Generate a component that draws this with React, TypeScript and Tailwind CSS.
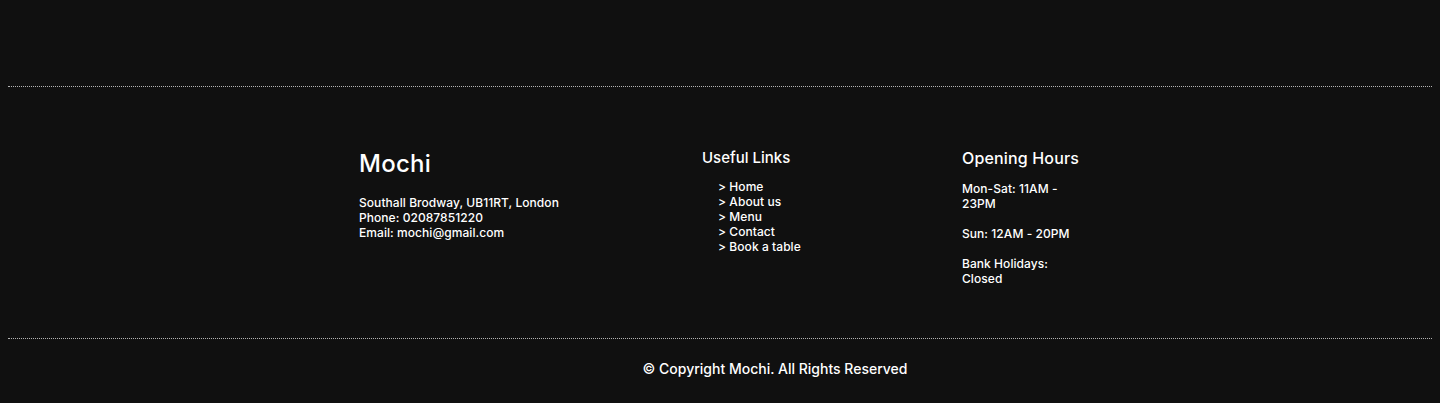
const links = ["Home", "About us", "Menu", "Contact", "Book a table"];

export default function App() {
  return (
    <div
      className="min-h-[403px] bg-[#101010] text-white"
      style={{ fontFamily: "Inter, 'Noto Sans', sans-serif" }}
    >
      <div className="h-[86px]" />
      <footer>
        <div className="mx-2 border-t border-dotted border-[#b4b4b4]" />
        <div className="flex pl-[359px] pt-[61px] pb-[52px]">
          <div className="w-[343px]">
            <h2 className="text-2xl leading-8 font-medium tracking-[0.01em]">Mochi</h2>
            <div className="mt-[15px] text-xs leading-[15px] font-medium tracking-[0.005em]">
              <p>Southall Brodway, UB11RT, London</p>
              <p>Phone: 02087851220</p>
              <p>Email: mochi@gmail.com</p>
            </div>
          </div>
          <div className="w-[260px]">
            <h3 className="text-[15px] leading-5 font-medium">Useful Links</h3>
            <ul className="mt-[11px] pl-4 text-xs leading-[15px] font-medium tracking-[0.005em]">
              {links.map((l) => (
                <li key={l}>
                  <a href="#">&gt; {l}</a>
                </li>
              ))}
            </ul>
          </div>
          <div className="w-[120px]">
            <h3 className="text-base leading-5 font-medium whitespace-nowrap tracking-[0.01em]">
              Opening Hours
            </h3>
            <div className="mt-[13px] space-y-[15px] text-xs leading-[15px] font-medium tracking-[0.005em]">
              <p>Mon-Sat: 11AM - 23PM</p>
              <p>Sun: 12AM - 20PM</p>
              <p>Bank Holidays: Closed</p>
            </div>
          </div>
        </div>
        <div className="mx-2 border-t border-dotted border-[#b4b4b4]" />
        <p className="pt-5 pb-6 pl-[110px] text-center text-sm leading-5 font-medium">
          © Copyright Mochi. All Rights Reserved
        </p>
      </footer>
    </div>
  );
}
